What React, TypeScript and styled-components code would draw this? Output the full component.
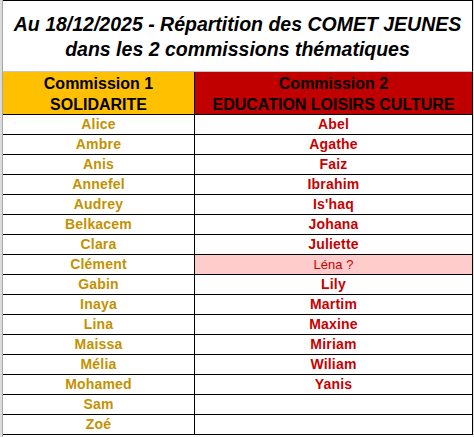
import styled, { createGlobalStyle } from 'styled-components';

const GlobalStyle = createGlobalStyle`
  html, body {
    margin: 0;
    padding: 0;
    background: #ffffff;
  }
  body {
    font-family: "Liberation Sans", Arial, sans-serif;
  }
`;

const Page = styled.div`
  display: flex;
  width: 474px;
  height: 437px;
  overflow: hidden;
`;

const Gutter = styled.div`
  width: 2px;
  background: #dcdcdc;
  border-right: 1px solid #a6a6a6;
  flex-shrink: 0;
`;

const EdgeGutter = styled.div`
  width: 1px;
  background: #e4e4e4;
  flex-shrink: 0;
`;

const Sheet = styled.div`
  display: grid;
  grid-template-columns: 192px 278px;
  grid-template-rows: 72px 43px;
  grid-auto-rows: 20px;
  align-content: start;
`;

const Title = styled.div`
  grid-column: 1 / span 2;
  border-top: 1px solid #000000;
  border-bottom: 1px solid #c6c6c6;
  border-right: 1px solid #000000;
  display: flex;
  align-items: center;
  justify-content: center;
  text-align: center;
  font-size: 19.5px;
  line-height: 25px;
  font-weight: bold;
  font-style: italic;
  color: #000000;
  padding-top: 2px;
  box-sizing: border-box;
`;

const HeadCell = styled.div<{ $bg: string }>`
  background: ${(p) => p.$bg};
  border-bottom: 1px solid #000000;
  border-right: 1px solid #000000;
  display: flex;
  flex-direction: column;
  justify-content: center;
  align-items: center;
  font-size: 16px;
  line-height: 21px;
  font-weight: bold;
  color: #000000;
  padding-top: 1px;
  box-sizing: border-box;
`;

const Cell = styled.div<{ $color: string; $bg?: string; $plain?: boolean }>`
  line-height: 19px;
  border-bottom: 1px solid #000000;
  border-right: 1px solid #000000;
  background: ${(p) => p.$bg || '#ffffff'};
  color: ${(p) => p.$color};
  font-size: ${(p) => (p.$plain ? '13px' : '14px')};
  letter-spacing: ${(p) => (p.$plain ? '0' : '0.2px')};
  font-weight: ${(p) => (p.$plain ? 'normal' : 'bold')};
  text-align: center;
  white-space: nowrap;
  box-sizing: border-box;
`;

const GOLD = '#C39100';
const RED = '#C80000';

const solidarite = [
  'Alice', 'Ambre', 'Anis', 'Annefel', 'Audrey', 'Belkacem', 'Clara', 'Clément',
  'Gabin', 'Inaya', 'Lina', 'Maissa', 'Mélia', 'Mohamed', 'Sam', 'Zoé',
];

const education = [
  'Abel', 'Agathe', 'Faiz', 'Ibrahim', "Is'haq", 'Johana', 'Juliette', 'Léna ?',
  'Lily', 'Martim', 'Maxine', 'Miriam', 'Wiliam', 'Yanis', '', '',
];

const App = () => {
  return (
    <>
      <GlobalStyle />
      <Page>
        <Gutter />
        <Sheet>
          <Title>
            Au 18/12/2025 - Répartition des COMET JEUNES
            <br />
            dans les 2 commissions thématiques
          </Title>
          <HeadCell $bg="#FFC000">
            <span>Commission 1</span>
            <span>SOLIDARITE</span>
          </HeadCell>
          <HeadCell $bg="#C00000">
            <span>Commission 2</span>
            <span>EDUCATION LOISIRS CULTURE</span>
          </HeadCell>
          {solidarite.map((name, i) => {
            const other = education[i];
            const unsure = other.endsWith('?');
            return [
              <Cell key={`a${i}`} $color={GOLD}>{name}</Cell>,
              <Cell
                key={`b${i}`}
                $color={RED}
                $bg={unsure ? '#FFCCCC' : undefined}
                $plain={unsure}
              >
                {other}
              </Cell>,
            ];
          })}
        </Sheet>
        <EdgeGutter />
      </Page>
    </>
  );
};

export default App;
